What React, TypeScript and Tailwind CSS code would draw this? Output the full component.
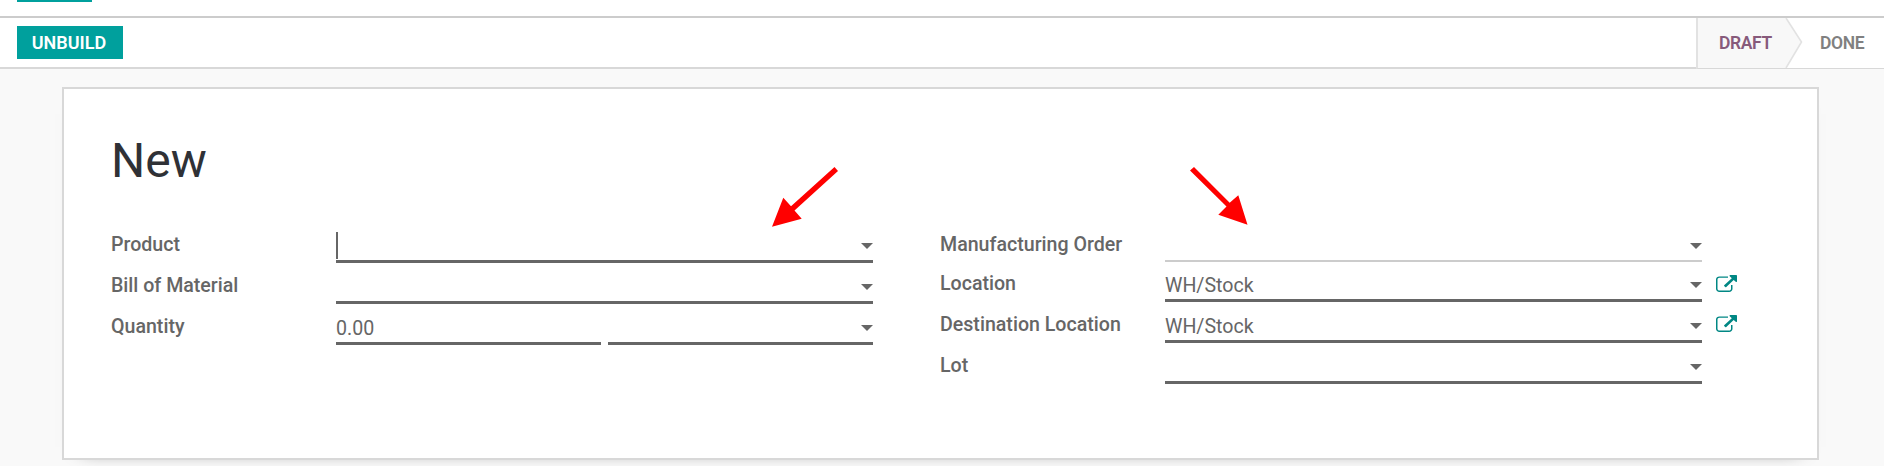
import React from "react";

const LINK_PATH =
  "M1408 928v320q0 119-84.5 203.5t-203.5 84.5h-832q-119 0-203.5-84.5t-84.5-203.5v-832q0-119 84.5-203.5t203.5-84.5h704q14 0 23 9t9 23v64q0 14-9 23t-23 9h-704q-66 0-113 47t-47 113v832q0 66 47 113t113 47h832q66 0 113-47t47-113v-320q0-14 9-23t23-9h64q14 0 23 9t9 23zm384-864v512q0 26-19 45t-45 19-45-19l-176-176-652 652q-10 10-23 10t-23-10l-114-114q-10-10-10-23t10-23l652-652-176-176q-19-19-19-45t19-45 45-19h512q26 0 45 19t19 45z";

function ExternalLink() {
  return (
    <svg className="mt-[13px] ml-3.5 h-[17px] w-[21px] shrink-0 text-[#008784]" viewBox="0 0 1792 1536" preserveAspectRatio="none" fill="currentColor">
      <path d={LINK_PATH} />
    </svg>
  );
}

function Caret() {
  return (
    <svg className="mb-[11px] h-1.5 w-3 shrink-0 text-[#666]" viewBox="0 0 12 6" fill="currentColor">
      <path d="M0 0H12L6 6Z" />
    </svg>
  );
}

type FieldProps = { value?: string; caret?: boolean; focused?: boolean; light?: boolean; className?: string };

function Field({ value, caret = true, focused, light, className = "w-[537px]" }: FieldProps) {
  const border = light ? "border-b-2 border-[#ccc]" : "border-b-3 border-[#666]";
  return (
    <div className={`flex h-full shrink-0 items-end justify-between ${border} ${className}`}>
      <span className="mb-px leading-6">{value}</span>
      {focused && <span className="mr-auto mb-px h-[27px] w-0.5 bg-[#666]" />}
      {caret && <Caret />}
    </div>
  );
}

type RowProps = { label: string; height?: string; labelPadding?: string; children: React.ReactNode };

function Row({ label, height = "h-[41px]", labelPadding = "pt-[11px]", children }: RowProps) {
  return (
    <div className={`flex ${height}`}>
      <div className={`w-[225px] shrink-0 self-start leading-6 font-medium ${labelPadding}`}>{label}</div>
      {children}
    </div>
  );
}

export default function App() {
  return (
    <div className="flex h-[466px] w-full flex-col overflow-hidden bg-[#f9f9f9] font-['Roboto',sans-serif] text-[19.6px] text-[#666]">
      <div className="h-[18px] shrink-0 border-b-2 border-[#ccc] bg-white pl-[17px]">
        <div className="h-0.5 w-[75px] bg-[#00a09d]" />
      </div>
      <header className="flex h-[51px] shrink-0 bg-white">
        <div className="flex-1 border-b-2 border-[#d8d8d8] pt-2 pl-[17px]">
          <button className="block h-[33px] w-[106px] bg-[#00a09d] pr-0.5 pb-px text-[18px] font-semibold text-white">UNBUILD</button>
        </div>
        <div className="relative flex w-[188px] border-b border-l-2 border-b-[#d8d8d8] border-l-[#e2e2e2] text-[17.5px] font-semibold tracking-[-0.4px]">
          <svg className="absolute top-0 left-0 h-[50px] w-[106px]" viewBox="0 0 106 50">
            <path d="M0 0H88L103.500 24L88 50H0Z" fill="#f8f8f8" />
            <path d="M88 0L103.500 24L88 50" fill="none" stroke="#e2e2e2" strokeWidth="1.6" />
          </svg>
          <span className="relative ml-[21px] w-[101px] leading-[50px] text-[#875a7b]">DRAFT</span>
          <span className="relative leading-[50px] text-[#808080]">DONE</span>
        </div>
      </header>
      <main className="flex-1 pt-[18px] pl-[62px]">
        <section className="relative h-[373px] w-[1757px] border-2 border-[#d8d8d8] bg-white pl-[47px] shadow-[0_7px_18px_-20px_#000]">
          <h1 className="pt-11 pb-[33px] text-[48px] leading-[56px] text-[#2f3136]">New</h1>
          <div className="flex">
            <div className="w-[829px]">
              <Row label="Product"><Field focused /></Row>
              <Row label="Bill of Material"><Field /></Row>
              <Row label="Quantity">
                <Field value="0.00" caret={false} className="w-[265px]" />
                <Field className="ml-[7px] w-[265px]" />
              </Row>
            </div>
            <div>
              <Row label="Manufacturing Order" height="h-10"><Field light /></Row>
              <Row label="Location" height="h-10" labelPadding="pt-2.5"><Field value="WH/Stock" /><ExternalLink /></Row>
              <Row label="Destination Location"><Field value="WH/Stock" /><ExternalLink /></Row>
              <Row label="Lot"><Field /></Row>
            </div>
          </div>
          <svg className="absolute top-[78px] left-[707px] h-[60px] w-[70px]" viewBox="0 0 70 60" fill="#f00">
            <path d="M63.500 0L67 4L23.500 43.500L30.700 51.700L1 59.800L12.300 30.700L20 39.200Z" />
          </svg>
          <svg className="absolute top-[78px] left-[1126px] h-[60px] w-[60px]" viewBox="0 0 60 60" fill="#f00">
            <path d="M4 0L39.700 35.700L48.300 28.300L57.500 57.700L28.300 47.700L36.500 39.500L0 3.500Z" />
          </svg>
        </section>
      </main>
    </div>
  );
}
